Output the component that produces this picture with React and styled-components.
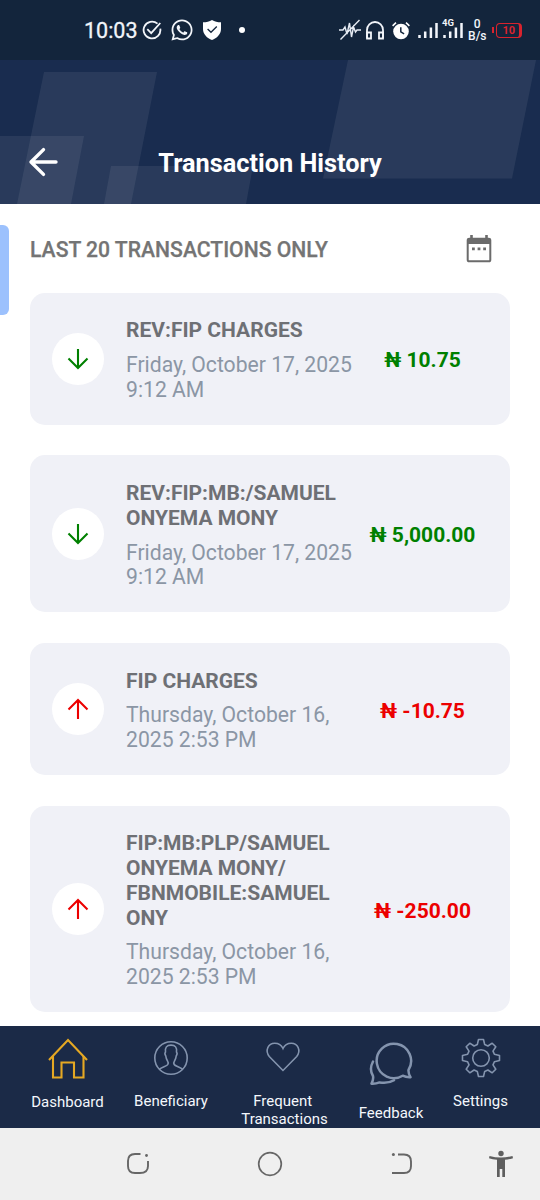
import React from 'react';
import styled, { createGlobalStyle } from 'styled-components';
import { FaWhatsapp } from 'react-icons/fa';

const TRANSACTIONS = [
  {
    id: 1,
    title: 'REV:FIP CHARGES',
    date: 'Friday, October 17, 2025 9:12 AM',
    amount: '10.75',
    type: 'credit',
  },
  {
    id: 2,
    title: 'REV:FIP:MB:/SAMUEL ONYEMA MONY',
    date: 'Friday, October 17, 2025 9:12 AM',
    amount: '5,000.00',
    type: 'credit',
  },
  {
    id: 3,
    title: 'FIP CHARGES',
    date: 'Thursday, October 16, 2025 2:53 PM',
    amount: '-10.75',
    type: 'debit',
  },
  {
    id: 4,
    title: 'FIP:MB:PLP/SAMUEL ONYEMA MONY/ FBNMOBILE:SAMUEL ONY',
    date: 'Thursday, October 16, 2025 2:53 PM',
    amount: '-250.00',
    type: 'debit',
  },
];

const HomeIcon = () => (
  <svg width="40" height="41" viewBox="0 0 40 41" fill="none" stroke="#e5a823" strokeWidth="2.1">
    <path d="M1 22 20 2l19 20" />
    <path d="M5 18v21.500h8.500V24.500h12.500V39.500H35.500V18" />
  </svg>
);

const UserIcon = () => (
  <svg width="36" height="36" viewBox="0 0 36 36" fill="none" stroke="#8494ae" strokeWidth="1.600">
    <circle cx="18" cy="18" r="16.200" />
    <path d="M6.500 29.300c2-2.300 7.300-2.900 8.300-4.800.7-1.300.4-2.500-.4-3.700-1-1.500-1.400-3-1.600-4.800-.9-1.200-1-3-.3-3.900-.7-4.600 1.200-7 5.500-7s6.200 2.400 5.500 7c.7.9.6 2.700-.3 3.900-.2 1.800-.6 3.300-1.600 4.800-.8 1.200-1.100 2.400-.4 3.700 1 1.900 6.300 2.500 8.300 4.800" />
  </svg>
);

const HeartIcon = () => (
  <svg width="36" height="32" viewBox="-0.500 0 37 32" fill="none" stroke="#8494ae" strokeWidth="1.600">
    <path d="M18 29.800 3.900 15.500C-.8 9.200 2.700 1.900 9.500 1.900c4 0 7 2 8.500 5.400 1.500-3.400 4.500-5.400 8.500-5.400 6.800 0 10.300 7.300 5.600 13.600L18 29.800Z" />
  </svg>
);

const ChatIcon = () => (
  <svg
    width="44"
    height="44"
    viewBox="0 0 44 44"
    fill="none"
    stroke="#8494ae"
    strokeWidth="2.500"
    strokeLinecap="round"
    strokeLinejoin="round"
  >
    <path d="M41.500 36.200c-3.300.2-5.400-.3-7.800-1.500A17.200 17.200 0 1 1 39.500 29c-.2 2.800.5 4.700 2 7.200Z" />
    <path d="M4 20.500c-2.700 5.200-2.300 10.800 0 14.500.5 2.600-.1 5.200-1.500 7.700 3.200.2 5.400-.2 8-1.300 4.800.9 10 .5 14.500-2.200" />
  </svg>
);

const GearIcon = () => (
  <svg width="40" height="40" viewBox="0 0 40 40" fill="none" stroke="#8494ae" strokeWidth="1.600">
    <path
      strokeLinejoin="round"
      d="M17.500 1.500h5l1.200 5.100 3.200 1.400L31.200 5.200l3.600 3.600-2.800 4.300 1.400 3.200 5.100 1.200v5l-5.100 1.200-1.400 3.200 2.800 4.300-3.600 3.600-4.300-2.800-3.200 1.400-1.200 5.100h-5l-1.200-5.100-3.200-1.400-4.300 2.800-3.600-3.600L8 26.900l-1.400-3.200-5.100-1.200v-5l5.100-1.200L8 13.100 5.200 8.800l3.600-3.600L13.100 8l3.200-1.400Z"
    />
    <circle cx="20" cy="20" r="8.300" />
  </svg>
);

const MENUS = [
  { label: 'Dashboard', Icon: HomeIcon, width: 103, top: 12, gap: 14 },
  { label: 'Beneficiary', Icon: UserIcon, width: 104, top: 14, gap: 16 },
  { label: 'Frequent\u00a0\nTransactions', Icon: HeartIcon, width: 123, top: 15, gap: 19, nudge: 4 },
  { label: 'Feedback', Icon: ChatIcon, width: 90, top: 14.5, gap: 19.5 },
  { label: 'Settings', Icon: GearIcon, width: 89, top: 12, gap: 14 },
];

function StatusBar() {
  return (
    <StatusWrap>
      <Clock>10:03</Clock>
      <StatusLeft>
        <svg width="20" height="20" viewBox="0 0 20 20" fill="none" stroke="#f2f5fa" strokeWidth="1.800">
          <path d="M15.500 3.600A8.400 8.400 0 1 0 18.300 8.600" />
          <path d="m5.300 9.200 3.900 3.900L18.300 3" />
        </svg>
        <FaWhatsapp size={24} color="#f2f5fa" />
        <svg width="20" height="20" viewBox="0 0 20 20">
          <path d="M10 0c2.600 1.600 5.500 2.300 9 2.300V9c0 5.300-4.200 9.300-9 11C5.200 18.300 1 14.300 1 9V2.300C4.500 2.300 7.400 1.600 10 0Z" fill="#fff" />
          <path d="m5.600 9 3.400 3.300L14.800 6.500" fill="none" stroke="#13253c" strokeWidth="1.300" />
        </svg>
        <Dot />
      </StatusLeft>
      <StatusRight>
        <svg width="22" height="22" viewBox="0 0 22 22" fill="none" stroke="#e6ebf3" strokeWidth="1.400">
          <path d="M0 11h4l2-3 2 7 2.500-11 2 14 2-10 2 5 1.500-2H22M1.500 20.500 20.500 1" />
        </svg>
        <svg width="18" height="19" viewBox="0 0 18 19" fill="none" stroke="#f2f5fa" strokeWidth="1.800">
          <path d="M1 17V9a8 8 0 0 1 16 0v8" />
          <path d="M1 11.500h4v6H1zM13 11.500h4v6h-4z" />
        </svg>
        <AlarmIcon viewBox="0 0 18 19">
          <circle cx="9" cy="10.500" r="7.800" fill="#fff" />
          <path d="M8.800 6.300v4.500l3.300 2" fill="none" stroke="#13253c" strokeWidth="1.500" />
          <path d="M.6 4.800 4 1.600M17.400 4.800 14 1.600" stroke="#fff" strokeWidth="1.600" />
        </AlarmIcon>
        <svg width="20" height="17" viewBox="0 0 20 17" stroke="#f2f5fa" strokeWidth="2.500">
          <path d="M1.500 13v3M7.200 9.500V16M12.900 5.500V16M18.500 1V16" />
        </svg>
        <Mobile>
          <Network>4G</Network>
          <svg width="20" height="17" viewBox="0 0 20 17" stroke="#f2f5fa" strokeWidth="2.500">
            <path d="M1.500 13v3M7.200 9.500V16M12.900 5.500V16M18.500 1V16" />
          </svg>
        </Mobile>
        <Speed>
          <span>0</span>
          <span>B/s</span>
        </Speed>
        <Battery>
          <BatteryBody>10</BatteryBody>
        </Battery>
      </StatusRight>
    </StatusWrap>
  );
}

function Header() {
  return (
    <HeaderWrap>
      <Pattern viewBox="0 0 540 144" fill="#fff" fillOpacity="0.072">
        <path d="M44 12H157L131 144H17Z" />
        <path d="M0 76H84L71 144H0Z" />
        <path d="M111 106H253L246 144H104Z" />
        <path d="M348 0H536L512 118.500H323Z" />
      </Pattern>
      <BackBtn>
        <svg
          width="31"
          height="30"
          viewBox="0 0 31 30"
          fill="none"
          stroke="#fff"
          strokeWidth="3.400"
          strokeLinecap="round"
          strokeLinejoin="round"
        >
          <path d="M28 15H3M15.500 2.600 3 15l12.500 12.400" />
        </svg>
      </BackBtn>
      <PageTitle>Transaction History</PageTitle>
    </HeaderWrap>
  );
}

function Transaction({ title, date, amount, type }) {
  return (
    <Card>
      <ArrowCircle>
        <Arrow $type={type} viewBox="0 0 22 22">
          <path d="M11 1v19M1.500 10.500 11 20l9.500-9.500" />
        </Arrow>
      </ArrowCircle>
      <Detail>
        <CardTitle>{title}</CardTitle>
        <CardDate>{date}</CardDate>
      </Detail>
      <Amount $type={type}>₦ {amount}</Amount>
    </Card>
  );
}

function App() {
  return (
    <>
      <GlobalStyle />
      <Screen>
        <StatusBar />
        <Header />
        <Main>
          <EdgeHandle />
          <ListHead>
            <ListTitle>LAST 20 TRANSACTIONS ONLY</ListTitle>
            <svg width="26" height="28" viewBox="0 0 26 28">
              <path d="M5.500 0v4M20.500 0v4" stroke="#6b6b6b" strokeWidth="2.600" />
              <rect x="1.700" y="3.700" width="22.600" height="22.600" rx="1.600" fill="none" stroke="#6b6b6b" strokeWidth="2" />
              <path d="M1.500 3.500h23V9h-23z" fill="#6b6b6b" />
              <path d="M6 13.900h2.800M11.600 13.900h2.800M17.200 13.900H20" stroke="#6b6b6b" strokeWidth="2.600" />
            </svg>
          </ListHead>
          <List>
            {TRANSACTIONS.map(item => (
              <Transaction key={item.id} {...item} />
            ))}
          </List>
        </Main>
        <TabBar>
          {MENUS.map(({ label, Icon, width, top, gap, nudge }) => (
            <Tab key={label} $width={width} $top={top} $gap={gap}>
              <TabIcon $nudge={nudge}>
                <Icon />
              </TabIcon>
              <TabLabel>{label}</TabLabel>
            </Tab>
          ))}
        </TabBar>
        <SystemNav>
          <svg width="24" height="24" viewBox="0 0 24 24" fill="none" stroke="#666" strokeWidth="1.900">
            <path d="M14.500 2H9C4 2 2 4 2 9v5c0 5 2 7 7 7h5c5 0 8-2 8-7V9" />
            <circle cx="20.500" cy="3.500" r="1.400" fill="#666" stroke="none" />
          </svg>
          <svg width="26" height="26" viewBox="0 0 26 26" fill="none" stroke="#666" strokeWidth="1.700">
            <circle cx="13" cy="13" r="11.300" />
          </svg>
          <svg width="22" height="24" viewBox="0 0 22 24" fill="none" stroke="#666" strokeWidth="1.900">
            <path d="M7 2.500h6c5 0 7 2 7 7V14c0 5-2 7-7 7H1" />
            <circle cx="2.400" cy="2.600" r="1.500" fill="#666" stroke="none" />
          </svg>
          <svg width="24" height="28" viewBox="0 0 24 28" fill="#5e5e5e">
            <circle cx="12" cy="3.500" r="2.700" />
            <path d="M.5 6c7.500 2 15.500 2 23 0l.5 2.200c-2.500.8-5 1.200-8 1.500V27h-2.700v-8h-2.600v8H8V9.700C5 9.400 2.500 9 0 8.200Z" />
          </svg>
        </SystemNav>
      </Screen>
    </>
  );
}

const GlobalStyle = createGlobalStyle`
  * {
    box-sizing: border-box;
    margin: 0;
  }

  body {
    font-family: Roboto, 'Liberation Sans', sans-serif;
    background-color: white;
  }

  svg {
    display: block;
    flex-shrink: 0;
  }
`;

const Screen = styled.div`
  display: flex;
  flex-direction: column;
  width: 540px;
  height: 1200px;
  overflow: hidden;
`;

const StatusWrap = styled.div`
  display: flex;
  align-items: center;
  height: 60px;
  padding: 0 18.5px 0 84px;
  background-color: #13253c;
  color: #f2f5fa;
`;

const Clock = styled.div`
  width: 58px;
  font-size: 21.5px;
  line-height: 24px;
  padding-top: 2px;
  -webkit-text-stroke: 0.3px #f2f5fa;
`;

const StatusLeft = styled.div`
  display: flex;
  align-items: center;
  gap: 8px;
`;

const Dot = styled.div`
  width: 6px;
  height: 6px;
  margin-left: 9px;
  border-radius: 50%;
  background-color: white;
`;

const StatusRight = styled.div`
  display: flex;
  align-items: center;
  gap: 5px;
  margin-left: auto;
`;

const AlarmIcon = styled.svg`
  width: 18px;
  height: 19px;
  margin: 0 3px;
`;

const Mobile = styled.div`
  position: relative;
`;

const Network = styled.span`
  position: absolute;
  top: -5px;
  left: -1px;
  font-size: 9.5px;
  font-weight: 700;
  line-height: 11px;
`;

const Speed = styled.div`
  display: flex;
  flex-direction: column;
  align-items: center;
  font-size: 12px;
  font-weight: 500;
  line-height: 12px;
`;

const Battery = styled.div`
  display: flex;
  align-items: center;
  gap: 2px;

  &::before {
    content: '';
    width: 2px;
    height: 6px;
    background-color: #d9232e;
  }
`;

const BatteryBody = styled.div`
  width: 26px;
  height: 15px;
  padding-right: 3.5px;
  border: 1.5px solid #d9232e;
  border-right-width: 3px;
  border-radius: 4px;
  color: #d9232e;
  font-size: 11px;
  font-weight: 700;
  line-height: 13px;
  text-align: right;
`;

const HeaderWrap = styled.header`
  position: relative;
  display: grid;
  grid-template-columns: 59px 1fr 59px;
  align-items: end;
  height: 144px;
  padding-bottom: 27px;
  background-color: #192c4f;
`;

const Pattern = styled.svg`
  position: absolute;
  inset: 0;
  width: 540px;
  height: 144px;
`;

const BackBtn = styled.button`
  position: relative;
  padding: 0 0 0 28px;
  border: none;
  background: none;
`;

const PageTitle = styled.h1`
  position: relative;
  color: white;
  font-size: 25.3px;
  font-weight: 700;
  line-height: 26px;
  text-align: center;
`;

const Main = styled.main`
  position: relative;
  height: 822px;
  padding: 0 30px;
`;

const EdgeHandle = styled.div`
  position: absolute;
  top: 21px;
  left: 0;
  width: 9px;
  height: 90px;
  border-radius: 0 6px 6px 0;
  background-color: #9cc1fd;
`;

const ListHead = styled.div`
  display: flex;
  align-items: center;
  justify-content: space-between;
  height: 88.5px;
  padding: 2px 18.5px 0 0;
`;

const ListTitle = styled.h2`
  color: #747474;
  font-size: 21.15px;
  font-weight: 500;
  -webkit-text-stroke: 0.25px #747474;
`;

const List = styled.div`
  display: flex;
  flex-direction: column;
  gap: 30.5px;
`;

const Card = styled.div`
  display: flex;
  align-items: center;
  width: 480px;
  padding: 22px 20px 22px 22px;
  border-radius: 15px;
  background-color: #f0f1f7;
`;

const ArrowCircle = styled.div`
  display: flex;
  align-items: center;
  justify-content: center;
  flex-shrink: 0;
  width: 52px;
  height: 52px;
  border-radius: 50%;
  background-color: white;
`;

const Arrow = styled.svg`
  width: 22px;
  height: 22px;
  fill: none;
  stroke: ${prop => (prop.$type === 'credit' ? '#008000' : '#ec0000')};
  stroke-width: 2.1;
  transform: ${prop => (prop.$type === 'credit' ? 'none' : 'rotate(180deg)')};
`;

const Detail = styled.div`
  flex-shrink: 0;
  width: 231px;
  margin-left: 22px;
  padding: 3.7px 0 0.4px;
`;

const CardTitle = styled.h3`
  color: #6e7075;
  font-size: 21px;
  font-weight: 700;
  line-height: 24.75px;
`;

const CardDate = styled.p`
  margin-top: 10px;
  color: #8b96a5;
  font-size: 21.15px;
  line-height: 24.75px;
`;

const Amount = styled.div`
  flex-shrink: 0;
  width: 131px;
  padding-top: 3px;
  color: ${prop => (prop.$type === 'credit' ? '#008000' : '#ec0000')};
  font-size: 21px;
  font-weight: 700;
  text-align: center;
  white-space: nowrap;
`;

const TabBar = styled.nav`
  position: relative;
  display: flex;
  height: 102px;
  padding-left: 16px;
  background-color: #1b2a47;
`;

const Tab = styled.div`
  display: flex;
  flex-direction: column;
  align-items: center;
  gap: ${prop => prop.$gap}px;
  width: ${prop => prop.$width}px;
  padding-top: ${prop => prop.$top}px;
`;

const TabIcon = styled.div`
  margin-right: ${prop => prop.$nudge || 0}px;
`;

const TabLabel = styled.span`
  color: #f4f7fc;
  font-size: 15px;
  line-height: 18px;
  text-align: center;
  white-space: pre-line;
`;

const SystemNav = styled.div`
  display: flex;
  align-items: center;
  gap: 107.5px;
  height: 72px;
  padding-left: 125.5px;
  background-color: #efefef;

  svg:last-child {
    margin-left: -31.5px;
  }
`;

export default App;
